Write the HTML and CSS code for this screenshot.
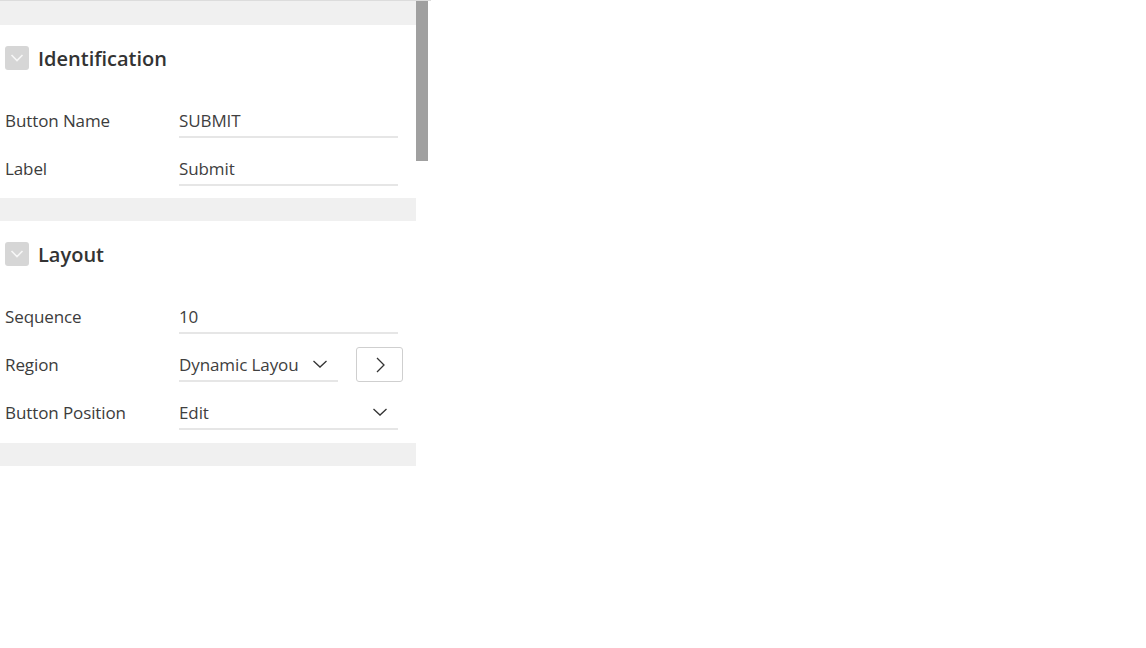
FILE: index.html
```html
<!DOCTYPE html>
<html lang="en">
<head>
<meta charset="utf-8">
<title>Button Properties</title>
<link rel="stylesheet" href="styles.css">
</head>
<body>
<div class="panel">
  <div class="content">
    <div class="band band-top"></div>
    <section class="section">
      <div class="section-header">
        <span class="toggle"><svg viewBox="0 0 24 24" width="24" height="24"><path d="M6.5 9 L12 14.5 L17.5 9" fill="none" stroke="#f7f7f7" stroke-width="1.6"/></svg></span>
        <h2 class="section-title">Identification</h2>
      </div>
      <div class="rows">
        <div class="row">
          <label class="row-label">Button Name</label>
          <div class="field"><span class="field-value">SUBMIT</span></div>
        </div>
        <div class="row">
          <label class="row-label">Label</label>
          <div class="field"><span class="field-value">Submit</span></div>
        </div>
      </div>
    </section>
    <div class="band"></div>
    <section class="section section-last">
      <div class="section-header">
        <span class="toggle"><svg viewBox="0 0 24 24" width="24" height="24"><path d="M6.5 9 L12 14.5 L17.5 9" fill="none" stroke="#f7f7f7" stroke-width="1.6"/></svg></span>
        <h2 class="section-title">Layout</h2>
      </div>
      <div class="rows">
        <div class="row">
          <label class="row-label">Sequence</label>
          <div class="field"><span class="field-value">10</span></div>
        </div>
        <div class="row">
          <label class="row-label">Region</label>
          <div class="field-group">
            <div class="field field-select field-short">
              <span class="field-value">Dynamic Layou</span>
              <svg class="chev" viewBox="0 0 16 10" width="16" height="10"><path d="M1.5 2 L8 8 L14.5 2" fill="none" stroke="#333" stroke-width="1.3"/></svg>
            </div>
            <button class="go-btn" type="button"><svg viewBox="0 0 12 18" width="12" height="18"><path d="M3 2 L10 9 L3 16" fill="none" stroke="#333" stroke-width="1.3"/></svg></button>
          </div>
        </div>
        <div class="row">
          <label class="row-label">Button Position</label>
          <div class="field field-select">
            <span class="field-value">Edit</span>
            <svg class="chev" viewBox="0 0 16 10" width="16" height="10"><path d="M1.5 2 L8 8 L14.5 2" fill="none" stroke="#333" stroke-width="1.3"/></svg>
          </div>
        </div>
      </div>
    </section>
    <div class="band"></div>
  </div>
  <div class="scroll-thumb"></div>
</div>
</body>
</html>
```

FILE: styles.css
```css
* { box-sizing: border-box; }
html, body { margin: 0; padding: 0; background: #ffffff; }
body {
  font-family: "Open Sans", "Noto Sans", "Liberation Sans", sans-serif;
  color: #333333;
}
.panel {
  position: relative;
  width: 431px;
  border-top: 1px solid #dcdcdc;
}
.content { width: 416px; }
.band { height: 23px; background: #f0f0f0; }
.band-top { height: 24px; }
.section { padding: 21px 18px 12px 5px; }
.section-last { padding-bottom: 13px; }
.section-header {
  display: flex;
  align-items: center;
  gap: 9px;
  height: 24px;
}
.toggle {
  width: 24px;
  height: 24px;
  border-radius: 3px;
  background: #d6d6d6;
  display: flex;
}
.section-title {
  margin: 0;
  font-size: 20px;
  font-weight: 600;
  color: #333333;
  line-height: 26px;
  padding-top: 2px;
}
.rows {
  margin-top: 36px;
  display: flex;
  flex-direction: column;
  gap: 16px;
}
.row {
  display: grid;
  grid-template-columns: 174px 1fr;
  align-items: center;
  height: 32px;
}
.row-label {
  font-size: 17px;
  line-height: 22px;
  padding-bottom: 2px;
  color: #3c3c3c;
  white-space: nowrap;
  letter-spacing: -0.1px;
}
.field {
  height: 32px;
  border-bottom: 2px solid #e6e6e6;
  display: flex;
  align-items: center;
  padding-bottom: 2px;
  font-size: 17px;
  color: #404040;
  letter-spacing: -0.1px;
}
.field-value { white-space: nowrap; }
.field-select { justify-content: space-between; padding-right: 10px; }
.field-short { width: 159px; padding-right: 10px; }
.chev { display: block; }
.field-group {
  display: flex;
  align-items: flex-end;
  height: 32px;
  gap: 18px;
}
.go-btn {
  width: 47px;
  height: 35px;
  flex: none;
  border: 1px solid #cfcfcf;
  border-radius: 3px;
  background: #ffffff;
  display: flex;
  align-items: center;
  justify-content: center;
  padding: 0;
}
.go-btn svg { display: block; }
.scroll-thumb {
  position: absolute;
  top: 0;
  left: 416px;
  width: 12px;
  height: 160px;
  background: #a0a0a0;
}
```
